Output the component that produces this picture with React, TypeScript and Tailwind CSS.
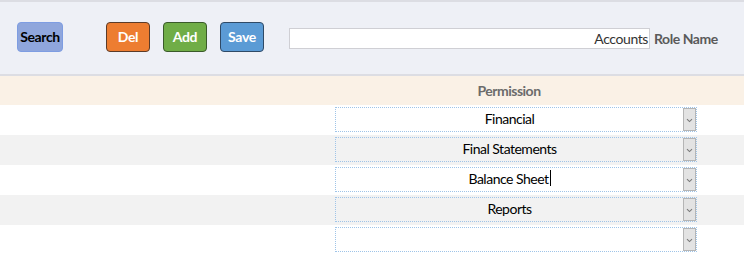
import React from "react";

const rows = [
  { label: "Financial", bg: "bg-white", caret: false },
  { label: "Final Statements", bg: "bg-[#f2f2f2]", caret: false },
  { label: "Balance Sheet", bg: "bg-white", caret: true },
  { label: "Reports", bg: "bg-[#f2f2f2]", caret: false },
  { label: "", bg: "bg-white", caret: false },
];

function Chevron() {
  return (
    <svg width="7" height="5" viewBox="0 0 7 5" className="block mt-[2px]">
      <path d="M1 1.2 L3.5 3.6 L6 1.2" fill="none" stroke="#7a7a7a" strokeWidth="1.1" />
    </svg>
  );
}

export default function App() {
  const font = { fontFamily: "Lato, 'Open Sans', sans-serif" };
  return (
    <div className="w-[744px] h-[254px] overflow-hidden bg-white" style={font}>
      <div className="h-[2px] bg-[#dcdde3]" />
      <div className="h-[74px] bg-[#eef0f6] border-b-2 border-[#dcdde3] flex items-start pt-[20px]">
        <button className="ml-[17px] w-[46px] h-[30px] pb-[1px] rounded-[4px] bg-[#8fa6dc] border border-[#7e9de2] text-[14px] tracking-[-0.4px] font-bold text-black flex items-center justify-center">
          Search
        </button>
        <button className="ml-[43px] w-[44px] h-[30px] pb-[1px] rounded-[4px] bg-[#ed7d31] border border-[#5b3b28] text-[14px] tracking-[-0.3px] font-bold text-white flex items-center justify-center">
          Del
        </button>
        <button className="ml-[13px] w-[44px] h-[30px] pb-[1px] rounded-[4px] bg-[#70ad47] border border-[#3a5a2a] text-[14px] tracking-[-0.3px] font-bold text-white flex items-center justify-center">
          Add
        </button>
        <button className="ml-[13px] w-[44px] h-[30px] pb-[1px] rounded-[4px] bg-[#5b9bd5] border border-[#2f4a66] text-[14px] tracking-[-0.3px] font-bold text-white flex items-center justify-center">
          Save
        </button>
        <div className="ml-[25px] mt-[6px] w-[361px] h-[21px] pb-[1px] bg-white border border-[#cfcfd4] flex items-center justify-end pr-[1px] text-[14px] tracking-[-0.4px] text-[#333]">
          Accounts
        </div>
        <div className="ml-[4px] mt-[6px] h-[21px] pb-[1px] flex items-center text-[14px] tracking-[-0.45px] font-bold text-[#5a5a5a]">
          Role Name
        </div>
      </div>
      <div className="h-[29px] bg-[#faf1e6] flex items-center pl-[335px]">
        <span className="w-[348px] text-center text-[14px] tracking-[-0.5px] font-bold text-[#6b6b6b]">Permission</span>
      </div>
      {rows.map((r, i) => (
        <div key={i} className={`h-[30px] ${r.bg} pt-[2px]`}>
          <div className="ml-[335px] w-[362px] h-[25px] border border-dotted border-[#9fc4e8] flex items-stretch">
            <div className="flex-1 flex items-center justify-center pb-[3px] text-[14px] tracking-[-0.5px] text-black">
              {r.label}
              {r.caret && <span className="inline-block w-[1px] h-[16px] bg-black ml-[1px]" />}
            </div>
            <div className="w-[13px] bg-[#e3e3e3] border border-[#b5b5b5] flex items-center justify-center">
              <Chevron />
            </div>
          </div>
        </div>
      ))}
    </div>
  );
}
